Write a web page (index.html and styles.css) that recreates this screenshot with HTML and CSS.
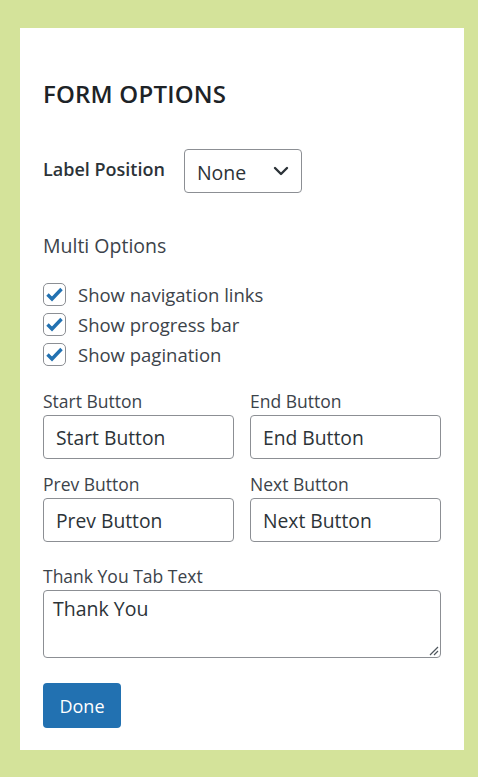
FILE: index.html
```html
<!DOCTYPE html>
<html>
<head>
<meta charset="utf-8">
<link rel="stylesheet" href="styles.css">
</head>
<body>
<div class="panel">
  <h2 class="title">FORM OPTIONS</h2>
  <div class="label-row">
    <span class="strong-label">Label Position</span>
    <div class="select">
      <span>None</span>
      <svg class="chev" width="16" height="10" viewBox="0 0 16 10"><path d="M2 2 L8 8 L14 2" fill="none" stroke="#2c3338" stroke-width="2.4" stroke-linecap="round" stroke-linejoin="round"/></svg>
    </div>
  </div>
  <div class="section-title">Multi Options</div>
  <div class="checks">
    <label class="check"><span class="box"><svg width="17" height="15" viewBox="0 0 17 15"><path d="M1.5 7.5 L6 12 L15.5 2" fill="none" stroke="#2271b1" stroke-width="3.4" stroke-linejoin="miter"/></svg></span>Show navigation links</label>
    <label class="check"><span class="box"><svg width="17" height="15" viewBox="0 0 17 15"><path d="M1.5 7.5 L6 12 L15.5 2" fill="none" stroke="#2271b1" stroke-width="3.4" stroke-linejoin="miter"/></svg></span>Show progress bar</label>
    <label class="check"><span class="box"><svg width="17" height="15" viewBox="0 0 17 15"><path d="M1.5 7.5 L6 12 L15.5 2" fill="none" stroke="#2271b1" stroke-width="3.4" stroke-linejoin="miter"/></svg></span>Show pagination</label>
  </div>
  <div class="grid">
    <div class="field"><div class="flabel">Start Button</div><div class="input">Start Button</div></div>
    <div class="field"><div class="flabel">End Button</div><div class="input">End Button</div></div>
    <div class="field"><div class="flabel">Prev Button</div><div class="input">Prev Button</div></div>
    <div class="field"><div class="flabel">Next Button</div><div class="input">Next Button</div></div>
  </div>
  <div class="field ta-field">
    <div class="flabel">Thank You Tab Text</div>
    <div class="textarea">Thank You
      <svg class="grip" width="12" height="12" viewBox="0 0 12 12"><path d="M11 3 L3 11 M11 7 L7 11" stroke="#50575e" stroke-width="1.2"/></svg>
    </div>
  </div>
  <button class="done">Done</button>
</div>
</body>
</html>
```
FILE: styles.css
```css
html, body { margin: 0; padding: 0; }
body {
  background: #d4e39a;
  font-family: "Open Sans", "Noto Sans", sans-serif;
  color: #1d2327;
  padding: 28px 14px 27px 20px;
  width: 478px;
  height: 777px;
  box-sizing: border-box;
}
.panel {
  background: #fff;
  height: 722px;
  box-sizing: border-box;
  padding: 0 23px;
  display: flex;
  flex-direction: column;
}
.title {
  margin: 49px 0 0 0;
  font-size: 24px;
  font-weight: 600;
  line-height: 34px;
  color: #1d2327;
  letter-spacing: 0.2px;
}
.label-row {
  margin-top: 38px;
  display: flex;
  align-items: center;
  gap: 19px;
}
.strong-label {
  font-size: 18px;
  font-weight: 600;
  color: #2c3338;
  padding-bottom: 4px;
}
.select {
  width: 118px;
  height: 44px;
  box-sizing: border-box;
  border: 1px solid #8c8f94;
  border-radius: 4px;
  display: flex;
  align-items: center;
  justify-content: space-between;
  padding: 0 12px 0 12px;
  font-size: 19.5px;
  color: #2c3338;
}
.select span { padding-top: 2px; }
.section-title {
  margin-top: 40px;
  font-size: 19.5px;
  color: #3c434a;
  line-height: 26px;
}
.checks {
  margin-top: 23px;
  display: flex;
  flex-direction: column;
  gap: 6px;
}
.check {
  display: flex;
  align-items: center;
  gap: 12px;
  font-size: 18.5px;
  color: #3c434a;
  height: 24px;
}
.box {
  width: 23px;
  height: 23px;
  box-sizing: border-box;
  border: 1px solid #8c8f94;
  border-radius: 5px;
  display: flex;
  align-items: center;
  justify-content: center;
}
.grid {
  margin-top: 24px;
  display: grid;
  grid-template-columns: 191px 191px;
  column-gap: 16px;
  row-gap: 14px;
}
.flabel {
  font-size: 17.5px;
  color: #3c434a;
  line-height: 22px;
}
.input {
  margin-top: 3px;
  height: 44px;
  box-sizing: border-box;
  border: 1px solid #8c8f94;
  border-radius: 4px;
  padding: 0 12px;
  display: flex;
  align-items: center;
  font-size: 19.3px;
  color: #2c3338;
}
.ta-field { margin-top: 23px; }
.textarea {
  position: relative;
  margin-top: 3px;
  height: 68px;
  box-sizing: border-box;
  border: 1px solid #8c8f94;
  border-radius: 4px;
  padding: 4px 9px;
  font-size: 19.5px;
  color: #2c3338;
}
.grip { position: absolute; right: 1px; bottom: 1px; }
.done {
  margin-top: 25px;
  align-self: flex-start;
  width: 78px;
  height: 45px;
  background: #2271b1;
  border: none;
  border-radius: 4px;
  color: #fff;
  font-family: "Open Sans", "Noto Sans", sans-serif;
  font-size: 18px;
  font-weight: 500;
  padding: 0;
}
```
